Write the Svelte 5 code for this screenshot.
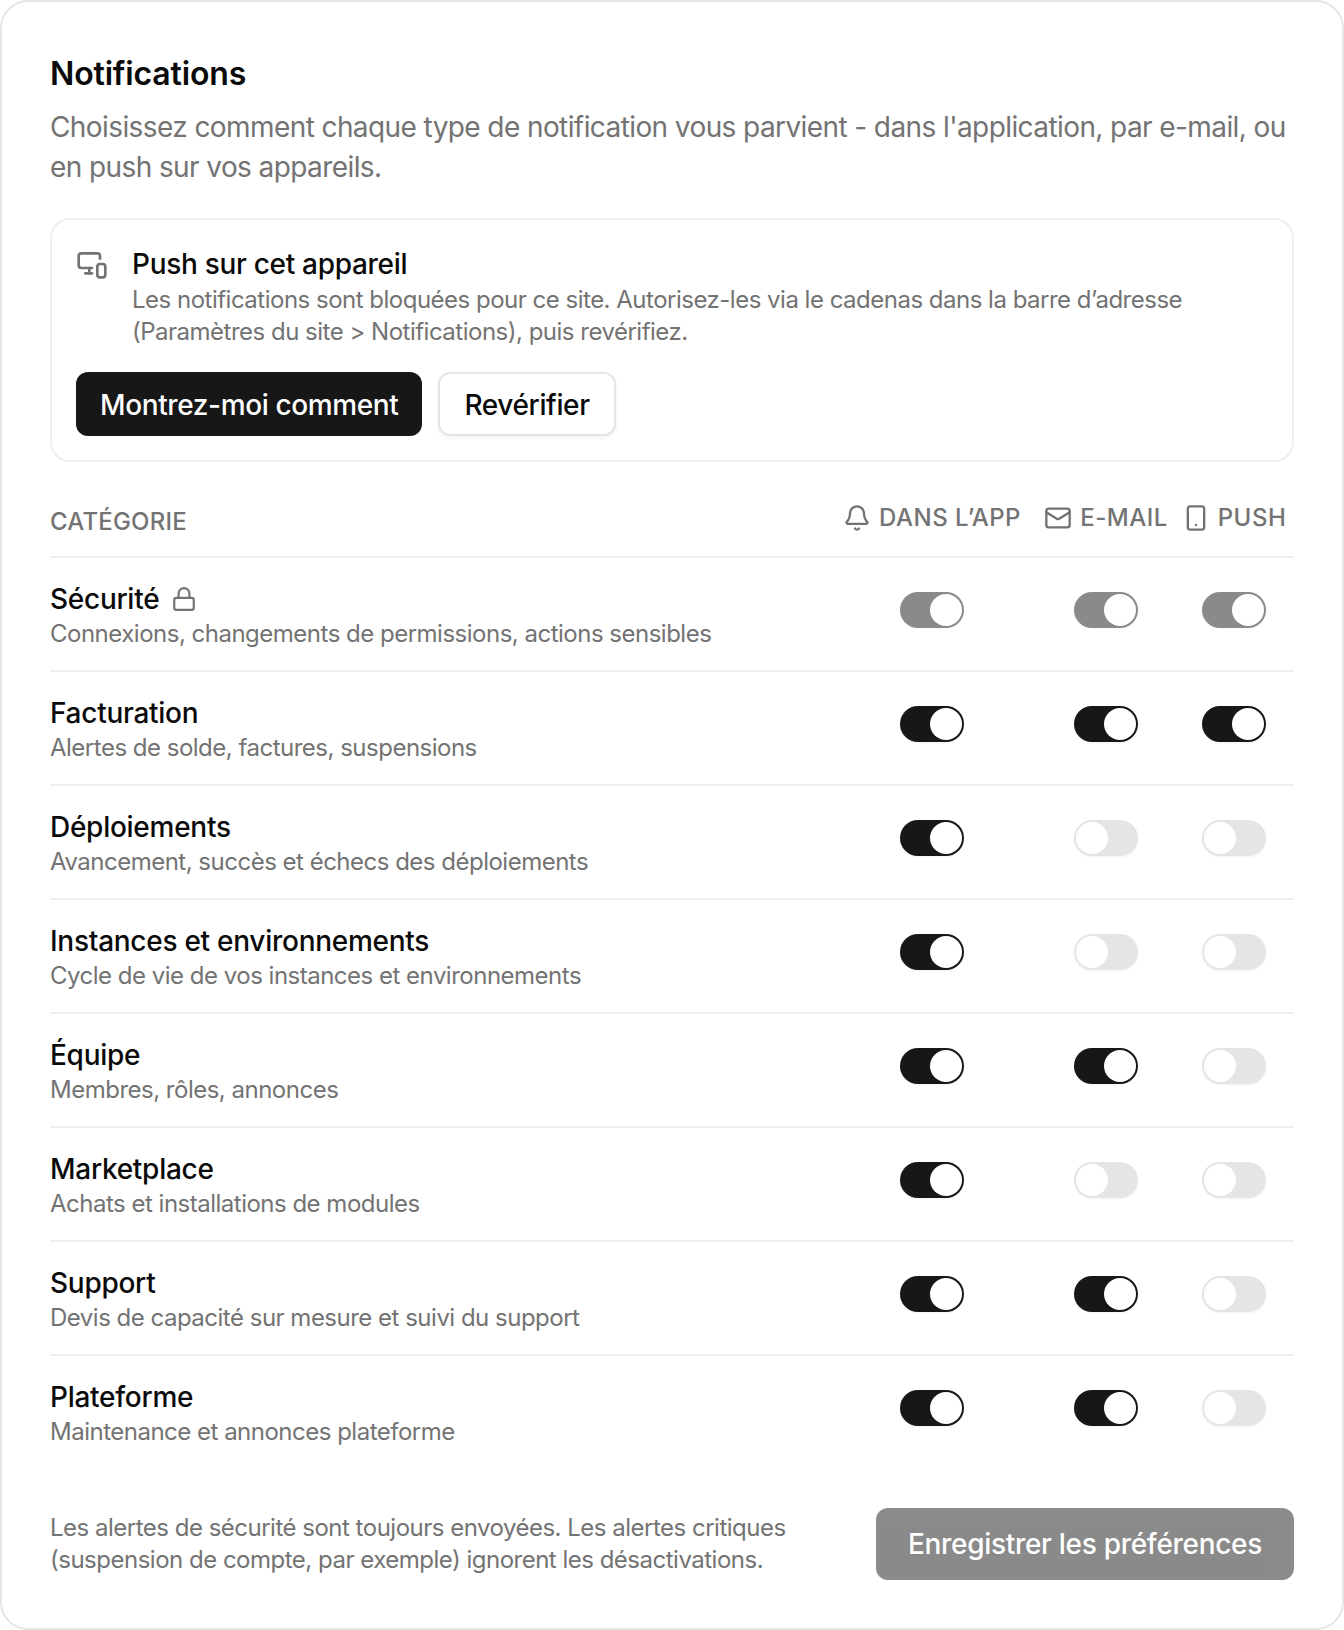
<script>
  const categories = [
    { name: 'Sécurité', desc: 'Connexions, changements de permissions, actions sensibles', app: true, mail: true, push: true, locked: true },
    { name: 'Facturation', desc: 'Alertes de solde, factures, suspensions', app: true, mail: true, push: true },
    { name: 'Déploiements', desc: 'Avancement, succès et échecs des déploiements', app: true, mail: false, push: false },
    { name: 'Instances et environnements', desc: 'Cycle de vie de vos instances et environnements', app: true, mail: false, push: false },
    { name: 'Équipe', desc: 'Membres, rôles, annonces', app: true, mail: true, push: false },
    { name: 'Marketplace', desc: 'Achats et installations de modules', app: true, mail: false, push: false },
    { name: 'Support', desc: 'Devis de capacité sur mesure et suivi du support', app: true, mail: true, push: false },
    { name: 'Plateforme', desc: 'Maintenance et annonces plateforme', app: true, mail: true, push: false }
  ];
</script>

{#snippet toggle(on, locked, label)}
  <button type="button" class="switch" class:on class:locked role="switch" aria-checked={on} aria-label={label} disabled={locked}>
    <span class="thumb"></span>
  </button>
{/snippet}

<div class="card">
  <h1>Notifications</h1>
  <p class="lead">Choisissez comment chaque type de notification vous parvient - dans l'application, par e-mail, ou en push sur vos appareils.</p>

  <section class="push-box">
    <div class="push-head">
      <svg class="push-icon" viewBox="0 0 24 24">
        <path d="M18 8V6a2 2 0 0 0-2-2H4a2 2 0 0 0-2 2v7a2 2 0 0 0 2 2h8" />
        <path d="M10 19v-3.96 3.15" />
        <path d="M7 19h5" />
        <rect width="6" height="10" x="16" y="12" rx="2" />
      </svg>
      <div>
        <h2>Push sur cet appareil</h2>
        <p>Les notifications sont bloquées pour ce site. Autorisez-les via le cadenas dans la barre d’adresse (Paramètres du site &gt; Notifications), puis revérifiez.</p>
      </div>
    </div>
    <div class="push-actions">
      <button type="button" class="btn dark">Montrez-moi comment</button>
      <button type="button" class="btn outline">Revérifier</button>
    </div>
  </section>

  <div class="grid-row head">
    <span class="cat-label">Catégorie</span>
    <span class="col-label">
      <svg viewBox="0 0 24 24">
        <path d="M10.268 21a2 2 0 0 0 3.464 0" />
        <path d="M3.262 15.326A1 1 0 0 0 4 17h16a1 1 0 0 0 .74-1.673C19.41 13.956 18 12.499 18 8A6 6 0 0 0 6 8c0 4.499-1.411 5.956-2.738 7.326" />
      </svg>
      Dans l’app
    </span>
    <span class="col-label">
      <svg viewBox="0 0 24 24">
        <path d="m22 7-8.991 5.727a2 2 0 0 1-2.009 0L2 7" />
        <rect x="2" y="4" width="20" height="16" rx="2" />
      </svg>
      E-mail
    </span>
    <span class="col-label">
      <svg viewBox="0 0 24 24">
        <rect width="14" height="20" x="5" y="2" rx="2" ry="2" />
        <path d="M12 18h.01" />
      </svg>
      Push
    </span>
  </div>

  <div class="rows">
    {#each categories as cat (cat.name)}
      <div class="grid-row item">
        <div class="info">
          <div class="name">
            {cat.name}
            {#if cat.locked}
              <svg class="lock" viewBox="0 0 24 24">
                <rect width="18" height="11" x="3" y="11" rx="2" ry="2" />
                <path d="M7 11V7a5 5 0 0 1 10 0v4" />
              </svg>
            {/if}
          </div>
          <div class="desc">{cat.desc}</div>
        </div>
        <div class="cell">{@render toggle(cat.app, cat.locked, `${cat.name} dans l’app`)}</div>
        <div class="cell">{@render toggle(cat.mail, cat.locked, `${cat.name} e-mail`)}</div>
        <div class="cell">{@render toggle(cat.push, cat.locked, `${cat.name} push`)}</div>
      </div>
    {/each}
  </div>

  <div class="footer">
    <p>Les alertes de sécurité sont toujours envoyées. Les alertes critiques (suspension de compte, par exemple) ignorent les désactivations.</p>
    <button type="button" class="btn save" disabled>Enregistrer les préférences</button>
  </div>
</div>

<style>
  :global(body) {
    margin: 0;
    background: #fff;
    font-family: Inter, "Liberation Sans", sans-serif;
  }

  .card {
    box-sizing: border-box;
    width: 1344px;
    height: 1630px;
    padding: 48px;
    background: #fff;
    border: 2px solid #e5e5e5;
    border-radius: 28px;
    color: #0a0a0a;
  }

  h1 {
    margin: 0;
    font-size: 32px;
    line-height: 48px;
    font-weight: 600;
    letter-spacing: -0.15px;
  }

  .lead {
    margin: 9px 0 0;
    font-size: 28px;
    line-height: 40px;
    letter-spacing: -0.59px;
    color: #737373;
  }

  .push-box {
    margin-top: 31px;
    padding: 24px;
    border: 2px solid #efefef;
    border-radius: 20px;
  }

  .push-head {
    display: flex;
    gap: 24px;
  }

  .push-icon {
    flex-shrink: 0;
    width: 32px;
    height: 32px;
    margin-top: 4px;
  }

  svg {
    fill: none;
    stroke: #737373;
    stroke-width: 2;
    stroke-linecap: round;
    stroke-linejoin: round;
  }

  h2 {
    margin: 0;
    font-size: 28px;
    line-height: 40px;
    font-weight: 500;
    letter-spacing: -0.3px;
  }

  .push-head p {
    margin: 0;
    font-size: 24px;
    line-height: 32px;
    letter-spacing: -0.5px;
    color: #737373;
  }

  .push-actions {
    display: flex;
    gap: 16px;
    margin-top: 24px;
  }

  .btn {
    height: 64px;
    padding: 1px 24px 0;
    border: none;
    border-radius: 12px;
    font-family: inherit;
    font-size: 28px;
    font-weight: 500;
    letter-spacing: -0.38px;
    cursor: pointer;
  }

  .dark {
    background: #171717;
    color: #fff;
  }

  .outline {
    background: #fff;
    color: #0a0a0a;
    border: 2px solid #e5e5e5;
    box-shadow: 0 2px 4px rgba(0, 0, 0, 0.05);
  }

  .grid-row {
    display: grid;
    grid-template-columns: 1fr 212px 136px 120px;
  }

  .head {
    box-sizing: border-box;
    align-items: center;
    height: 96px;
    padding-top: 17px;
    border-bottom: 2px solid #f0f0f0;
  }

  .cat-label,
  .col-label {
    font-size: 24px;
    font-weight: 500;
    color: #737373;
    text-transform: uppercase;
    letter-spacing: 0.5px;
  }

  .cat-label {
    padding-top: 8px;
    letter-spacing: 0.2px;
  }

  .col-label {
    display: flex;
    align-items: center;
    justify-content: center;
    gap: 8px;
    white-space: nowrap;
  }

  .col-label svg {
    flex-shrink: 0;
    width: 28px;
    height: 28px;
  }

  .item {
    height: 114px;
    box-sizing: border-box;
    border-bottom: 2px solid #f0f0f0;
  }

  .item:last-child {
    border-bottom: none;
  }

  .info {
    padding-top: 23px;
  }

  .name {
    display: flex;
    align-items: center;
    gap: 12px;
    font-size: 28px;
    line-height: 36px;
    font-weight: 500;
    letter-spacing: -0.27px;
  }

  .lock {
    width: 26px;
    height: 26px;
  }

  .desc {
    margin-top: 1px;
    font-size: 24px;
    line-height: 32px;
    letter-spacing: -0.5px;
    color: #737373;
  }

  .cell {
    display: flex;
    justify-content: center;
    padding-top: 34px;
  }

  .switch {
    position: relative;
    width: 64px;
    height: 36px;
    padding: 0;
    border: none;
    border-radius: 18px;
    background: #e5e5e5;
    cursor: pointer;
    box-shadow: 0 1px 2px rgba(0, 0, 0, 0.05);
  }

  .switch.on {
    background: #171717;
  }

  .switch.locked {
    opacity: 0.5;
    cursor: not-allowed;
  }

  .thumb {
    position: absolute;
    top: 2px;
    left: 2px;
    width: 32px;
    height: 32px;
    border-radius: 50%;
    background: #fff;
  }

  .on .thumb {
    left: 30px;
  }

  .footer {
    display: flex;
    align-items: center;
    justify-content: space-between;
    gap: 40px;
    margin-top: 38px;
  }

  .footer p {
    margin: 0;
    width: 780px;
    font-size: 24px;
    line-height: 32px;
    letter-spacing: -0.5px;
    color: #737373;
  }

  .save {
    flex-shrink: 0;
    height: 72px;
    padding: 0 32px;
    letter-spacing: -0.3px;
    background: #171717;
    color: #fff;
    opacity: 0.5;
    cursor: not-allowed;
    white-space: nowrap;
  }
</style>
